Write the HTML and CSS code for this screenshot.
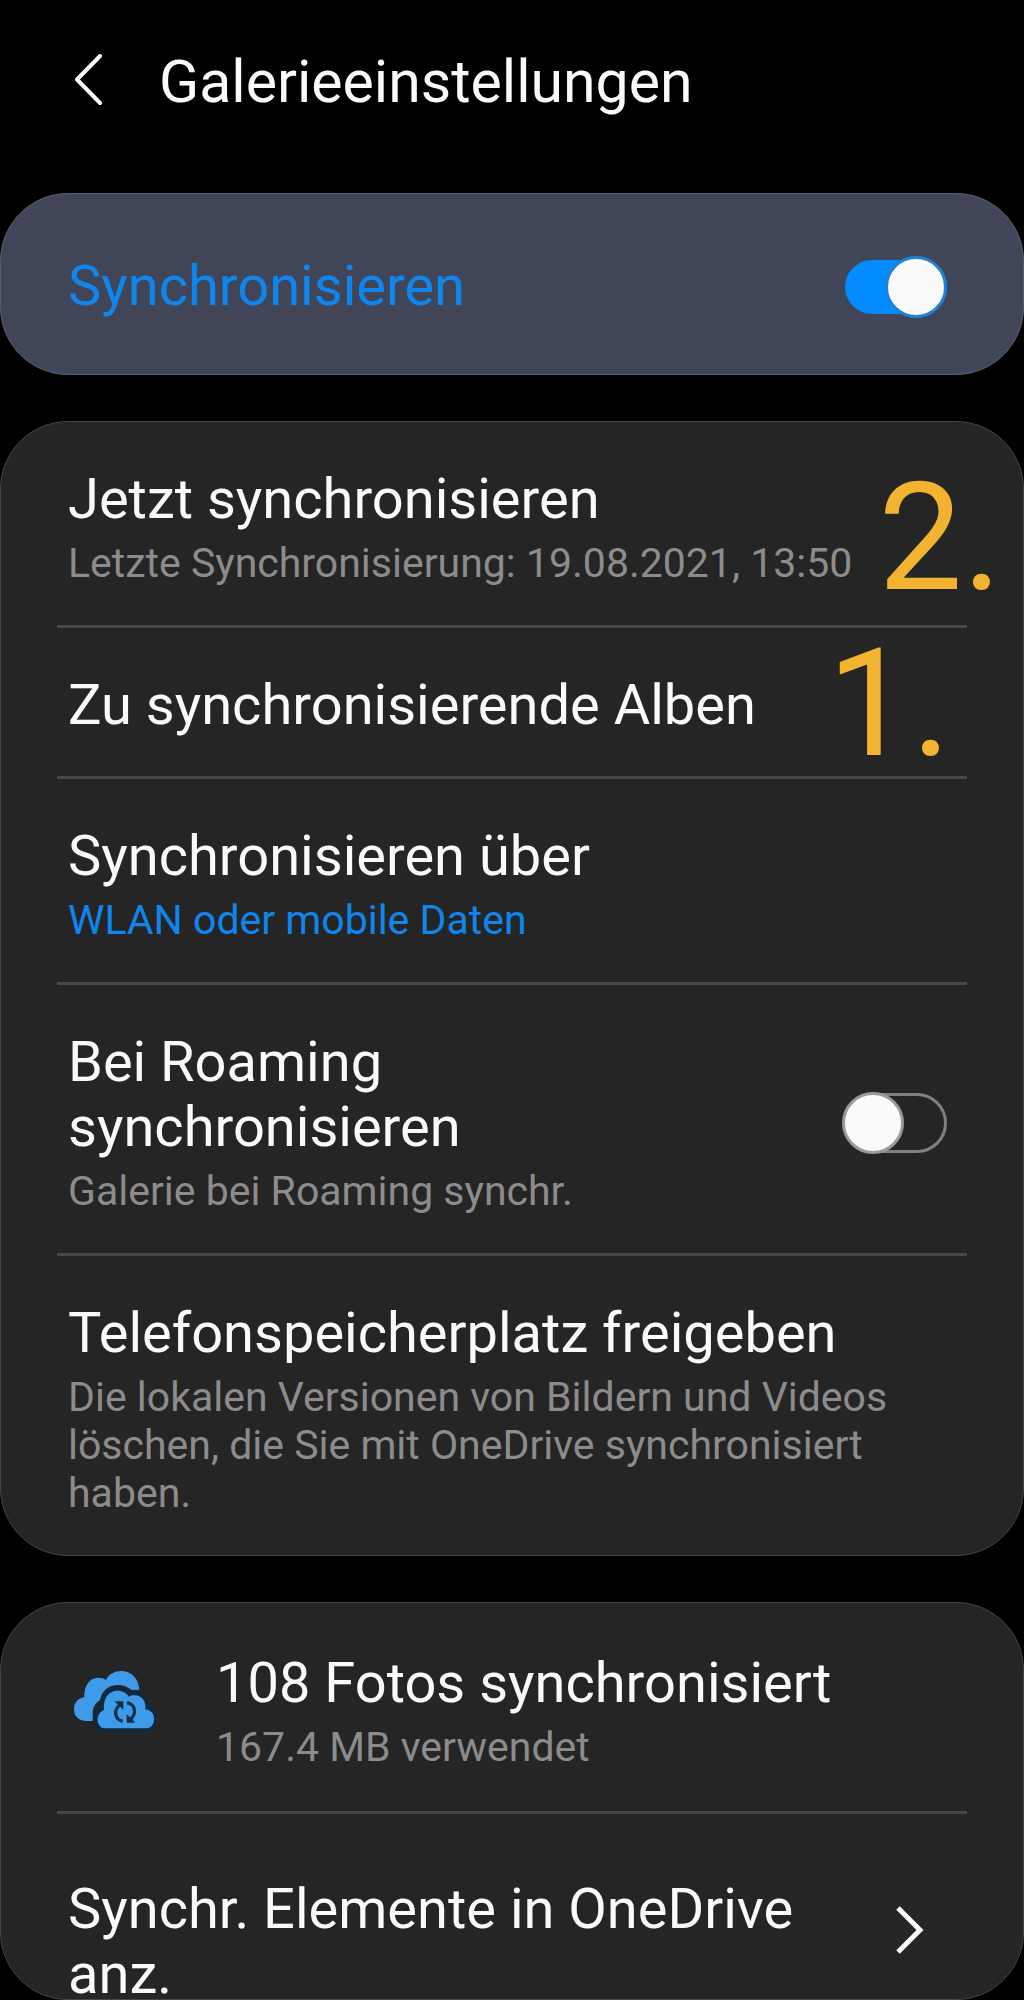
FILE: index.html
```
<!DOCTYPE html>
<html lang="de">
<head>
    <meta charset="UTF-8">
    <meta name="viewport" content="width=device-width, initial-scale=1">
    <title>Galerieeinstellungen</title>
    <link rel="stylesheet" href="styles.css">
</head>
<body>
<header class="top">
    <button class="back" type="button" aria-label="Zurück">
        <svg width="28" height="68" viewBox="0 0 28 68" fill="none" stroke="#fafafa" stroke-width="4" stroke-linecap="round" stroke-linejoin="round">
            <path d="M26 8 L3 31.500 L26 55"/>
        </svg>
    </button>
    <h1>Galerieeinstellungen</h1>
</header>
<main class="content">
    <!-- Hauptschalter -->
    <section class="card card-main">
        <div class="row">
            <label class="text title" for="sync">Synchronisieren</label>
            <input class="switch" id="sync" type="checkbox" role="switch" checked>
        </div>
    </section>

    <!-- Optionen -->
    <section class="card">
        <div class="row">
            <div class="text">
                <h2 class="title">Jetzt synchronisieren</h2>
                <p class="sub">Letzte Synchronisierung: 19.08.2021, 13:50</p>
            </div>
            <span class="mark mark-two">2.</span>
        </div>
        <div class="row">
            <div class="text">
                <h2 class="title">Zu synchronisierende Alben</h2>
            </div>
            <span class="mark mark-one">1.</span>
        </div>
        <div class="row">
            <div class="text">
                <h2 class="title">Synchronisieren über</h2>
                <p class="sub value">WLAN oder mobile Daten</p>
            </div>
        </div>
        <div class="row">
            <div class="text">
                <label class="title" for="roaming">Bei Roaming synchronisieren</label>
                <p class="sub">Galerie bei Roaming synchr.</p>
            </div>
            <input class="switch" id="roaming" type="checkbox" role="switch">
        </div>
        <div class="row">
            <div class="text">
                <h2 class="title">Telefonspeicherplatz freigeben</h2>
                <p class="sub">Die lokalen Versionen von Bildern und Videos löschen, die Sie mit OneDrive synchronisiert haben.</p>
            </div>
        </div>
    </section>

    <!-- OneDrive -->
    <section class="card card-drive">
        <div class="row row-status">
            <svg class="cloud" width="84" height="62" viewBox="96 84 252 186">
                <path fill="#3d9be9" d="M158 240 H140 C115 240 102 225 102 205 C102 185 114 171 133 169 C131 136 148 110 175 110 C185 110 192 112 198 117 C206 99 224 90 245 90 C275 90 297 115 298 146 L275 147 C262 136 246 132 234 132 C208 132 186 146 180 178 C166 186 158 200 158 215 Z"/>
                <path fill="#3d9be9" stroke="#0e2a42" stroke-width="24" paint-order="stroke" d="M196 262 C181 262 173 250 173 237 C173 222 181 211 192 207 C188 172 206 149 233 149 C248 149 260 156 267 167 C273 163 280 162 287 163 C307 166 319 182 316 205 C332 207 342 218 342 233 C342 250 332 262 318 262 Z"/>
                <path fill="none" stroke="#12314c" stroke-width="10" d="M248 241 C224 236 220 208 239 192 M261 185 C286 190 290 216 273 234"/>
                <path fill="#12314c" d="M224 181 H250 V207 Z M286 245 H260 V219 Z"/>
            </svg>
            <div class="text">
                <h2 class="title">108 Fotos synchronisiert</h2>
                <p class="sub">167.4 MB verwendet</p>
            </div>
        </div>
        <a class="row row-link" href="#">
            <span class="text title">Synchr. Elemente in OneDrive anz.</span>
            <svg class="next" width="28" height="50" viewBox="0 0 28 50" fill="none" stroke="#fafafa" stroke-width="5">
                <path d="M2 3 L24 25 L2 47"/>
            </svg>
        </a>
    </section>
</main>
</body>
</html>
```
FILE: styles.css
```
*, *::before{
    box-sizing: border-box;
    margin: 0;
    padding: 0;
}
body{
    display: flex;
    flex-direction: column;
    height: 100vh;
    overflow: hidden;
    background: #000;
    color: #fafafa;
    font-family: Roboto, "Liberation Sans", sans-serif;
}
.top{
    display: flex;
    gap: 57px;
    padding: 48px 74px 77px;
}
.back{
    border: none;
    background: none;
    cursor: pointer;
}
.back svg{
    display: block;
}
h1{
    font-size: 59px;
    line-height: 68px;
    font-weight: 400;
}
.content{
    flex: 1;
    min-height: 0;
    display: flex;
    flex-direction: column;
    gap: 46px;
}
.card{
    flex: none;
    padding: 0 56px;
    background: #252525;
    border: 1px solid #464646;
    border-radius: 68px;
}
.card-main{
    background: #414558;
    border-color: #5c5f6e;
    color: #0f85ee;
}
.card-drive{
    flex: 1;
    min-height: 0;
    overflow: hidden;
}
.row{
    position: relative;
    display: flex;
    align-items: center;
    gap: 60px;
    padding: 45px 11px 38px;
    color: inherit;
    text-decoration: none;
}
.row + .row{
    border-top: 3px solid #484848;
}
.card-main .row{
    padding: 60px 11px 55px;
}
.text{
    flex: 1;
}
.title{
    display: block;
    font-size: 56px;
    line-height: 65px;
    font-weight: 400;
}
.sub{
    margin-top: 7px;
    font-size: 41px;
    line-height: 48px;
    color: #8c8c8c;
}
.value{
    color: #0f85ee;
}
/* Schalter */
.switch{
    appearance: none;
    position: relative;
    flex: none;
    width: 102px;
    height: 60px;
    margin: 0 9px 0 60px;
    border: 3px solid #808080;
    border-radius: 30px;
    cursor: pointer;
}
.switch::before{
    content: "";
    position: absolute;
    top: -4px;
    left: -6px;
    width: 62px;
    height: 62px;
    background: #fafafa;
    border: 3px solid #9a9a9a;
    border-radius: 50%;
}
.switch:checked{
    height: 54px;
    background: #038cff;
    border-color: #038cff;
}
.switch:checked::before{
    top: -7px;
    left: 37px;
    border-color: #1f82d8;
}
/* Nummern der Schritte */
.mark{
    position: absolute;
    top: 0;
    font-size: 150px;
    line-height: 152px;
    color: #f2b430;
}
.mark-two{
    top: 40px;
    right: -35px;
}
.mark-one{
    right: 16px;
}
.row-status{
    padding-top: 48px;
    padding-bottom: 40px;
}
.cloud{
    flex: none;
    align-self: flex-start;
    margin: 18px 0 0 4px;
}
.row-link{
    align-items: flex-start;
    padding-top: 63px;
}
.next{
    flex: none;
    margin: 28px 32px 0 0;
}
```
